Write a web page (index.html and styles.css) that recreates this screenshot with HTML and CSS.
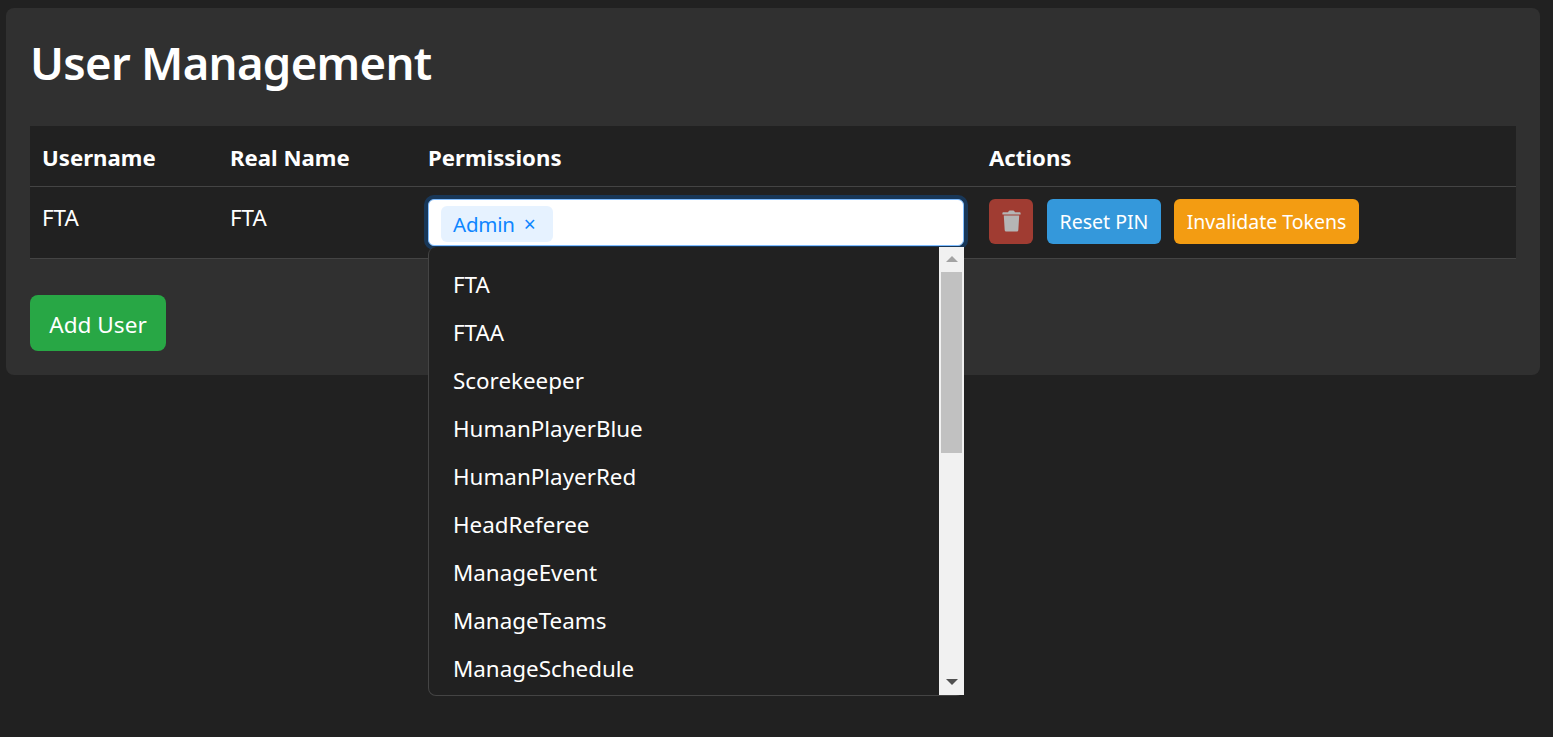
FILE: index.html
```html
<!DOCTYPE html>
<html lang="en">
<head>
  <meta charset="UTF-8">
  <meta name="viewport" content="width=device-width, initial-scale=1.0">
  <title>User Management</title>
  <link rel="stylesheet" href="styles.css">
</head>
<body>
  <div class="panel">
    <h1>User Management</h1>
    <table class="users">
      <colgroup>
        <col class="col-user">
        <col class="col-name">
        <col class="col-perms">
        <col>
      </colgroup>
      <thead>
        <tr>
          <th>Username</th>
          <th>Real Name</th>
          <th>Permissions</th>
          <th>Actions</th>
        </tr>
      </thead>
      <tbody>
        <tr>
          <td>FTA</td>
          <td>FTA</td>
          <td class="perm-cell">
            <div class="select">
              <div class="select-box">
                <span class="chip">Admin <span class="chip-x">×</span></span>
              </div>
              <div class="menu">
                <ul class="menu-list">
                  <li>FTA</li>
                  <li>FTAA</li>
                  <li>Scorekeeper</li>
                  <li>HumanPlayerBlue</li>
                  <li>HumanPlayerRed</li>
                  <li>HeadReferee</li>
                  <li>ManageEvent</li>
                  <li>ManageTeams</li>
                  <li>ManageSchedule</li>
                </ul>
                <div class="scrollbar">
                  <div class="arrow arrow-up"></div>
                  <div class="track"><div class="thumb"></div></div>
                  <div class="arrow arrow-down"></div>
                </div>
              </div>
            </div>
          </td>
          <td>
            <div class="actions">
              <button class="btn btn-delete" aria-label="Delete">
                <svg width="19" height="22" viewBox="0 0 19 22">
                  <path d="M0.4 3.2 C0.4 2.7 0.9 2.3 1.4 2.3 H6 L6.8 1 C7 0.7 7.3 0.5 7.7 0.5 H11.3 C11.7 0.5 12 0.7 12.2 1 L13 2.3 H17.6 C18.1 2.3 18.6 2.7 18.6 3.2 V4.4 H0.4 Z" fill="#b5b5b5"/>
                  <path d="M1.8 5.6 H17.2 L16.3 20 C16.2 21 15.5 21.6 14.6 21.6 H4.4 C3.5 21.6 2.8 21 2.7 20 Z" fill="#b5b5b5"/>
                </svg>
              </button>
              <button class="btn btn-reset">Reset PIN</button>
              <button class="btn btn-invalidate">Invalidate Tokens</button>
            </div>
          </td>
        </tr>
      </tbody>
    </table>
    <button class="btn-add">Add User</button>
  </div>
</body>
</html>
```

FILE: styles.css
```css
* {
  box-sizing: border-box;
}
html, body {
  height: 100%;
}
body {
  margin: 0;
  padding: 8px 13px 0 6px;
  background: #212121;
  color: #ffffff;
  font-family: "Noto Sans", "Open Sans", sans-serif;
  overflow: hidden;
}
.panel {
  background: #303030;
  border-radius: 8px;
  padding: 24px;
  height: 367px;
}
h1 {
  margin: 0 0 33px;
  font-size: 45.5px;
  line-height: 61px;
  font-weight: 600;
  letter-spacing: -0.7px;
}
.users {
  width: 100%;
  border-collapse: collapse;
  table-layout: fixed;
  background: #212121;
}
.col-user {
  width: 188px;
}
.col-name {
  width: 198px;
}
.col-perms {
  width: 561px;
}
th {
  height: 60px;
  padding: 4px 12px 0;
  text-align: left;
  font-size: 22.2px;
  font-weight: 700;
  border-bottom: 1px solid #444444;
}
td {
  height: 72px;
  padding: 0 12px 10px;
  font-size: 22.4px;
  border-bottom: 1px solid #444444;
}
td.perm-cell {
  padding: 0 12px;
  vertical-align: top;
}
td:last-child {
  padding: 0 12px;
}
.select {
  position: relative;
  width: 536px;
  margin-top: 12px;
}
.select-box {
  height: 47px;
  padding: 6px 12px;
  background: #ffffff;
  border: 1px solid #80bdff;
  border-radius: 6px;
  box-shadow: 0 0 0 4px rgba(0, 123, 255, 0.25);
}
.chip {
  display: inline-flex;
  align-items: center;
  gap: 9px;
  width: 112px;
  height: 36px;
  padding: 0 12px;
  background: #e6f2ff;
  border-radius: 6px;
  color: #0f86ff;
  font-size: 20.5px;
  letter-spacing: -0.2px;
}
.chip-x {
  font-size: 21px;
}
.menu {
  position: absolute;
  top: 48px;
  left: 0;
  width: 536px;
  height: 449px;
  display: flex;
  background: #212121;
  border: 1px solid #444444;
  border-top: 0;
  border-radius: 8px 0 8px 8px;
  z-index: 10;
}
.menu-list {
  flex: 1;
  margin: 0;
  padding: 14px 0 0;
  list-style: none;
  overflow: hidden;
}
.menu-list li {
  height: 48px;
  line-height: 48px;
  padding: 0 24px;
  font-size: 22.4px;
}
.scrollbar {
  width: 25px;
  margin: 0 -1px 0 0;
  display: flex;
  flex-direction: column;
  background: #f1f1f1;
}
.arrow {
  height: 25px;
  flex: none;
  display: flex;
  align-items: center;
  justify-content: center;
}
.arrow-up::before {
  content: "";
  border-left: 6px solid transparent;
  border-right: 6px solid transparent;
  border-bottom: 6px solid #a3a3a3;
}
.arrow-down::before {
  content: "";
  border-left: 6px solid transparent;
  border-right: 6px solid transparent;
  border-top: 6px solid #505050;
}
.track {
  flex: 1;
  padding: 0 2px;
}
.thumb {
  height: 181px;
  background: #c1c1c1;
}
.actions {
  display: flex;
  align-items: center;
  gap: 14px;
  margin-top: 2px;
  margin-bottom: 4px;
}
.btn {
  height: 45px;
  padding: 0 14px;
  border: 0;
  border-radius: 6px;
  color: #ffffff;
  font-family: inherit;
  font-size: 19.5px;
  white-space: nowrap;
}
.btn-delete {
  width: 44px;
  padding: 0;
  display: flex;
  align-items: center;
  justify-content: center;
  background: #a03c32;
}
.btn-reset {
  background: #3498db;
  width: 114px;
  padding: 1px 0 0;
}
.btn-invalidate {
  background: #f39c12;
  width: 185px;
  margin-left: -1px;
  padding: 1px 0 0;
}
.btn-add {
  display: block;
  margin-top: 36px;
  padding: 4px 0 0;
  width: 136px;
  height: 56px;
  border: 0;
  border-radius: 8px;
  background: #28a745;
  color: #ffffff;
  font-family: inherit;
  font-size: 22.6px;
}
```
